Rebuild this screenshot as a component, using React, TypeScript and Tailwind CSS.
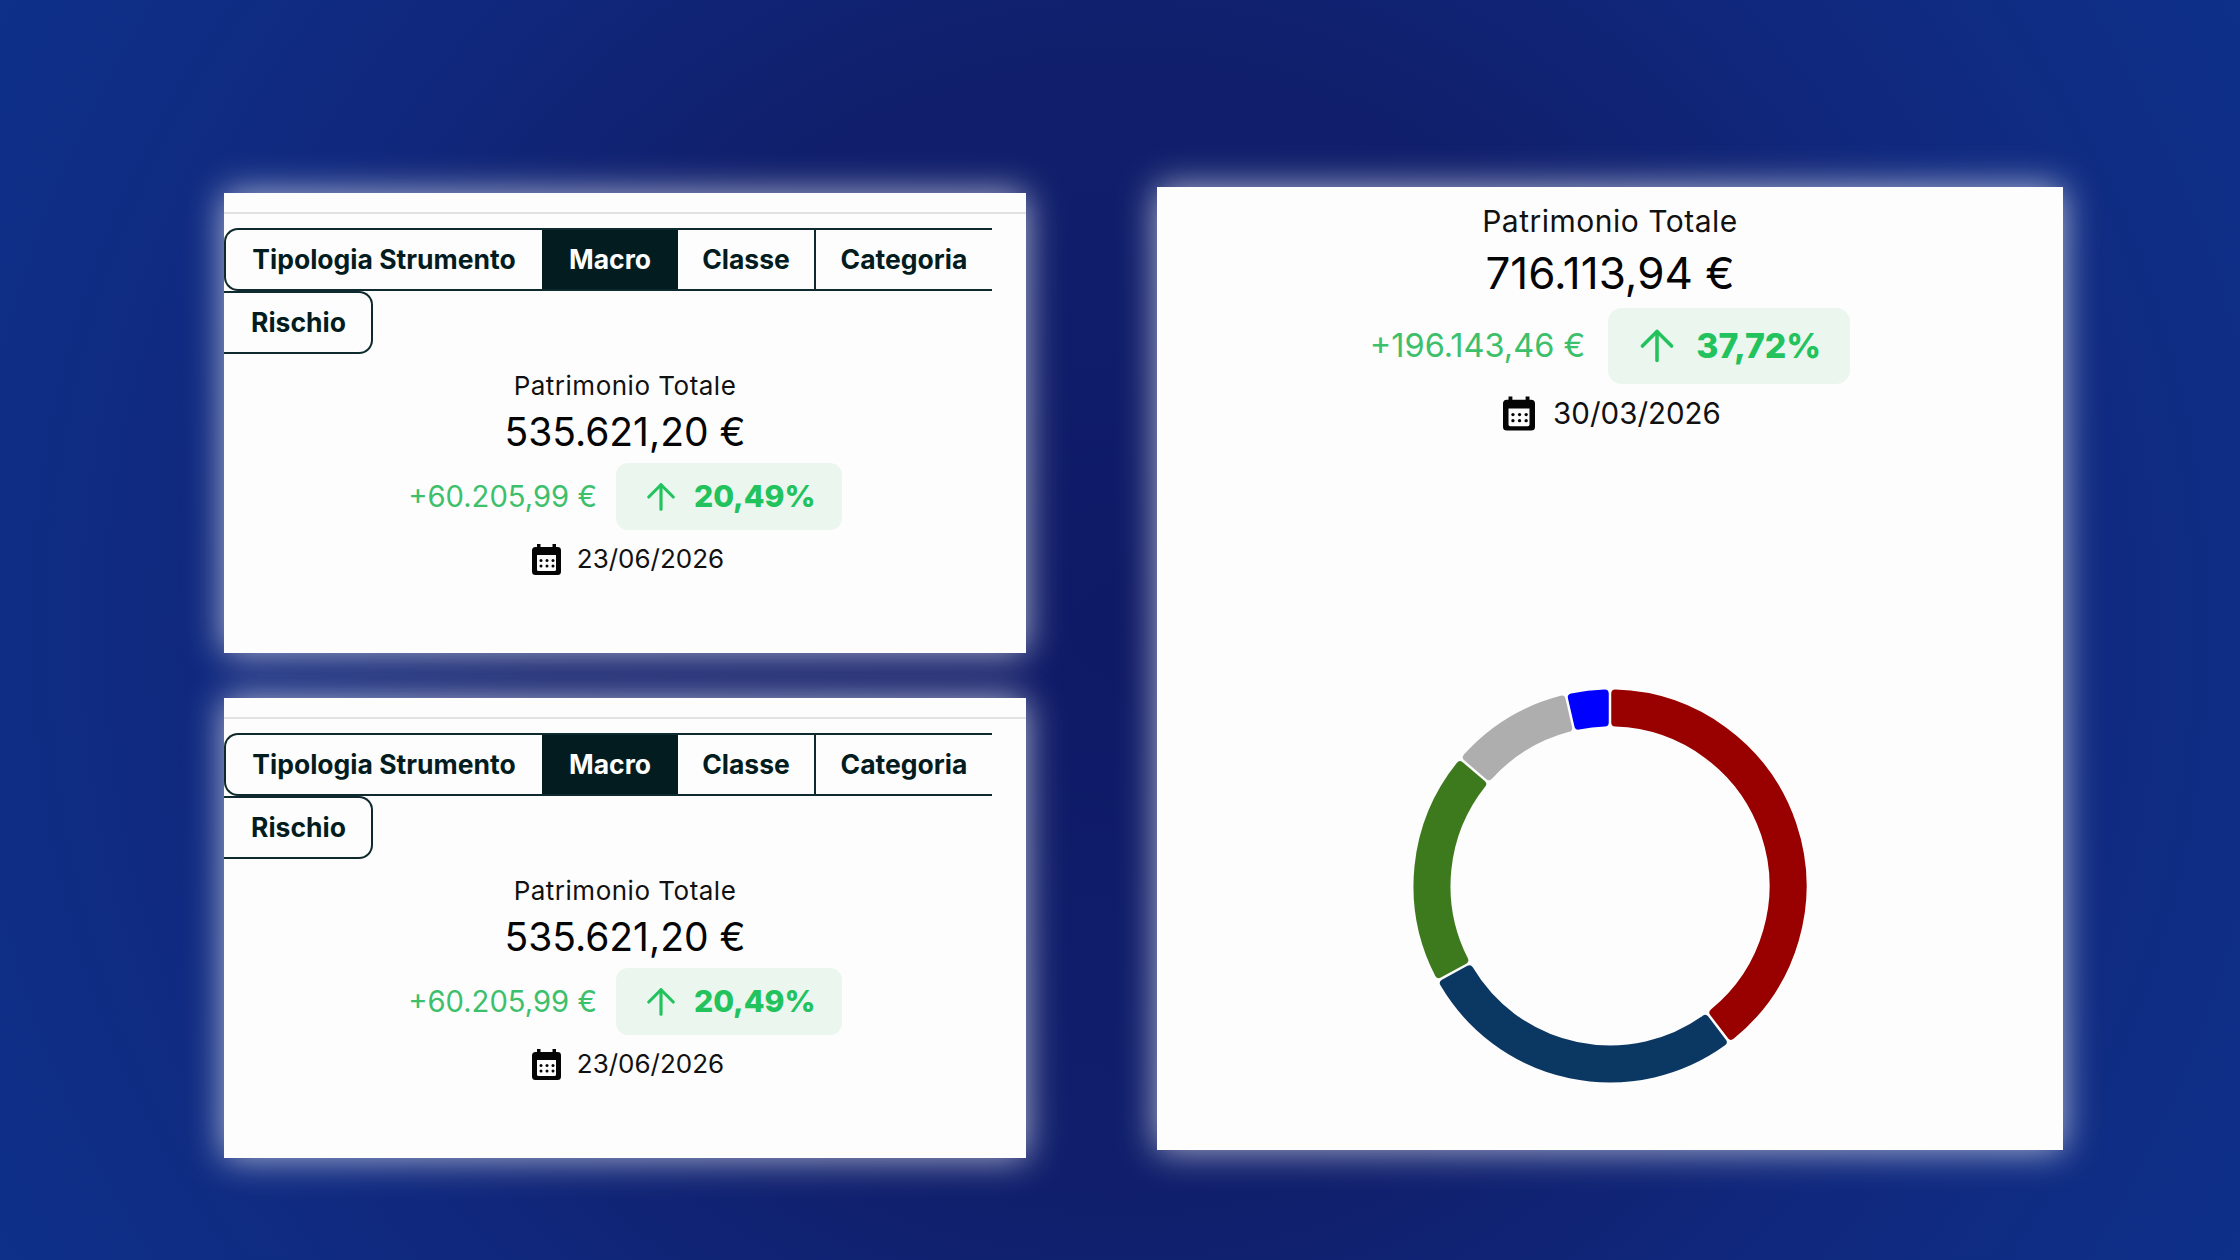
import { ArrowUp } from "lucide-react";

const CX = 200;
const CY = 200;
const R_OUT = 192.5;
const R_IN = 163.5;
const INSET = 5.25;

function polar(r: number, deg: number) {
  const a = (deg * Math.PI) / 180;
  return `${(CX + r * Math.sin(a)).toFixed(2)} ${(CY - r * Math.cos(a)).toFixed(2)}`;
}

function sector(start: number, end: number) {
  const shift = (r: number) => (Math.asin(INSET / r) * 180) / Math.PI;
  const large = end - start > 180 ? 1 : 0;
  return [
    `M ${polar(R_OUT, start + shift(R_OUT))}`,
    `A ${R_OUT} ${R_OUT} 0 ${large} 1 ${polar(R_OUT, end - shift(R_OUT))}`,
    `L ${polar(R_IN, end - shift(R_IN))}`,
    `A ${R_IN} ${R_IN} 0 ${large} 0 ${polar(R_IN, start + shift(R_IN))}`,
    "Z",
  ].join(" ");
}

const slices = [
  { from: 0, to: 142.6, color: "#990000" },
  { from: 142.6, to: 241.2, color: "#0b3763" },
  { from: 241.2, to: 310.4, color: "#3d7a1e" },
  { from: 310.4, to: 347, color: "#aeaeae" },
  { from: 347, to: 360, color: "#0000ff" },
];

function Donut() {
  return (
    <svg width="400" height="400" viewBox="0 0 400 400">
      {slices.map((s) => (
        <path
          key={s.color}
          d={sector(s.from, s.to)}
          fill={s.color}
          stroke={s.color}
          strokeWidth="8"
          strokeLinejoin="round"
        />
      ))}
    </svg>
  );
}

function CalendarIcon({ className }: { className: string }) {
  return (
    <svg viewBox="0 0 29 31" className={className} fill="#050505">
      <path d="M5 0h3.500v3h12V0H24v3h1.500A3.500 3.500 0 0 1 29 6.500v21a3.500 3.500 0 0 1-3.500 3.500h-22A3.500 3.500 0 0 1 0 27.500v-21A3.500 3.500 0 0 1 3.500 3H5z" />
      <path d="M5 11h19v14.500a1.500 1.500 0 0 1-1.500 1.500h-16A1.500 1.500 0 0 1 5 25.500z" fill="#fdfdfd" />
      {[9, 15, 21].map((x) =>
        [16.500, 22].map((y) => <circle key={`${x}-${y}`} cx={x} cy={y} r="1.500" />),
      )}
    </svg>
  );
}

const tabs = [
  { label: "Tipologia Strumento", cls: "w-[318px] rounded-l-[14px] border-l-2" },
  { label: "Macro", cls: "w-[136px] bg-[#031c20] text-white" },
  { label: "Classe", cls: "w-[138px] border-r-2" },
  { label: "Categoria", cls: "w-[176px]" },
  { label: "Rischio", cls: "w-[149px] rounded-r-[14px] border-r-2 pl-[2px]" },
];

function Summary({ date }: { date: string }) {
  return (
    <div className="flex flex-col items-center">
      <div className="mt-[15px] text-[26px] leading-[34px] tracking-[0.5px] text-[#111]">Patrimonio Totale</div>
      <div className="mt-[5px] text-[39px] leading-[48px] text-[#050505]">535.621,20 €</div>
      <div className="mt-[7px] flex items-center gap-[19px]">
        <span className="text-[29.200px] text-[#3cc06b]">+60.205,99 €</span>
        <span className="flex h-[67px] w-[226px] items-center gap-[12px] rounded-[12px] bg-[#eaf6ee] pl-[24px] text-[30.200px] font-extrabold text-[#22c25d]">
          <ArrowUp className="h-[42px] w-[42px]" strokeWidth={1.8} />
          20,49%
        </span>
      </div>
      <div className="mt-[12px] flex items-center gap-[16px] pl-[6px]">
        <CalendarIcon className="h-[31px] w-[29px]" />
        <span className="text-[26px] leading-[34px] text-[#111]">{date}</span>
      </div>
    </div>
  );
}

function SmallCard() {
  return (
    <section className="h-[460px] w-[802px] bg-[#fdfdfd] shadow-[0_0_34px_rgba(255,255,255,0.68)]">
      <div className="h-[19px] border-b-2 border-[#e2e2e2] box-content" />
      <div className="mt-[14px] flex w-[768px] flex-wrap overflow-hidden">
        {tabs.map((t) => (
          <div
            key={t.label}
            className={`flex h-[63px] items-center justify-center border-y-2 border-[#0f2a2e] text-[26.500px] font-bold text-[#031c20] ${t.cls}`}
          >
            {t.label}
          </div>
        ))}
      </div>
      <Summary date="23/06/2026" />
    </section>
  );
}

export default function App() {
  return (
    <div className="flex h-[1260px] w-[2240px] gap-[131px] overflow-hidden bg-[radial-gradient(circle,#0f1a66_0%,#101f6c_45%,#10297f_72%,#0e3089_100%)] pl-[224px] font-['Inter','Liberation_Sans',sans-serif]">
      <div className="flex flex-col gap-[45px] pt-[193px]">
        <SmallCard />
        <SmallCard />
      </div>
      <div className="pt-[187px]">
        <section className="flex h-[963px] w-[906px] flex-col items-center bg-[#fdfdfd] shadow-[0_0_34px_rgba(255,255,255,0.68)]">
          <div className="mt-[17px] text-[30px] leading-[34px] tracking-[0.5px] text-[#111]">Patrimonio Totale</div>
          <div className="mt-[9px] text-[44px] leading-[52px] text-[#050505]">716.113,94 €</div>
          <div className="mt-[9px] flex items-center gap-[23px]">
            <span className="text-[32.500px] text-[#3cc06b]">+196.143,46 €</span>
            <span className="flex h-[76px] w-[242px] items-center gap-[14px] rounded-[14px] bg-[#eaf6ee] pl-[24px] text-[33.800px] font-extrabold text-[#22c25d]">
              <ArrowUp className="h-[50px] w-[50px]" strokeWidth={1.7} />
              37,72%
            </span>
          </div>
          <div className="mt-[9px] flex items-center gap-[18px] pl-[4px]">
            <CalendarIcon className="h-[35px] w-[32px]" />
            <span className="text-[29.500px] leading-[40px] text-[#111]">30/03/2026</span>
          </div>
          <div className="mt-[253px]">
            <Donut />
          </div>
        </section>
      </div>
    </div>
  );
}
